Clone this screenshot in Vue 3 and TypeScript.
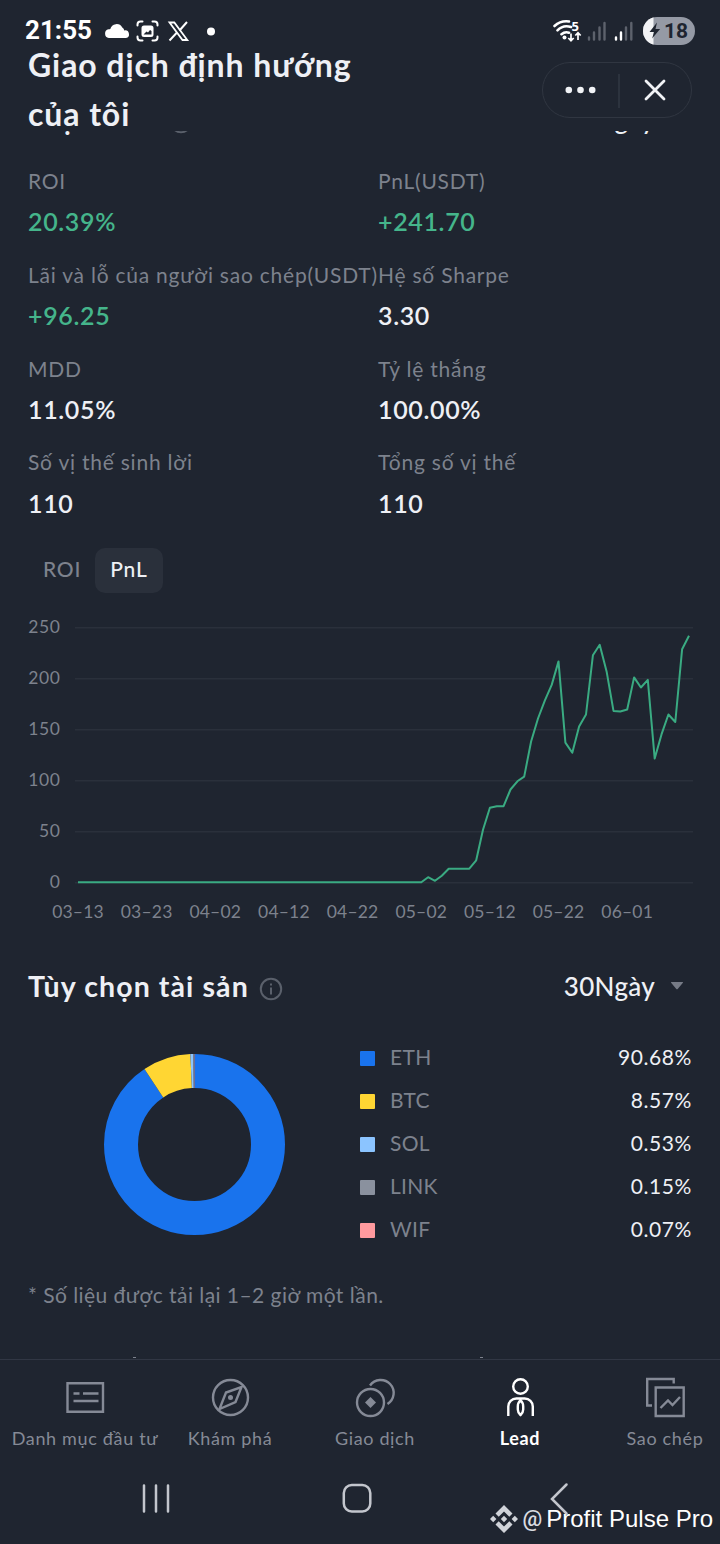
<script setup lang="ts">
import { computed } from 'vue'

interface Metric {
  label: string
  value: string
  up?: boolean
}

interface Asset {
  name: string
  share: number
  color: string
}

const metrics: Metric[] = [
  { label: 'ROI', value: '20.39%', up: true },
  { label: 'PnL(USDT)', value: '+241.70', up: true },
  { label: 'Lãi và lỗ của người sao chép(USDT)', value: '+96.25', up: true },
  { label: 'Hệ số Sharpe', value: '3.30' },
  { label: 'MDD', value: '11.05%' },
  { label: 'Tỷ lệ thắng', value: '100.00%' },
  { label: 'Số vị thế sinh lời', value: '110' },
  { label: 'Tổng số vị thế', value: '110' }
]

// daily PnL, flat at zero for the first 51 days
const pnl: number[] = [
  ...Array(51).fill(0),
  5, 1.5, 6.5, 13.3, 13.3, 13.3, 13.3, 21.6, 51.5, 73, 74.6, 74.6, 91, 99, 103.6,
  138, 160.6, 178, 193.5, 216.6, 137, 127, 152.7, 164.5, 222.5, 232.8, 206.8, 168,
  167.5, 169.4, 200.9, 191, 198.4, 121.3, 145, 164.5, 157.2, 228.4, 241.7
]

const yTicks = [250, 200, 150, 100, 50, 0]
const xTicks = ['03–13', '03–23', '04–02', '04–12', '04–22', '05–02', '05–12', '05–22', '06–01']

const xAt = (day: number) => 78 + day * 6.865
const yAt = (value: number) => 282.3 - value * 1.02

const line = computed(() =>
  pnl.map((v, i) => `${xAt(i).toFixed(1)},${yAt(v).toFixed(1)}`).join(' ')
)

const assets: Asset[] = [
  { name: 'ETH', share: 90.68, color: '#1973ed' },
  { name: 'BTC', share: 8.57, color: '#ffd633' },
  { name: 'SOL', share: 0.53, color: '#8bc4ff' },
  { name: 'LINK', share: 0.15, color: '#8a919e' },
  { name: 'WIF', share: 0.07, color: '#ff9a9e' }
]

const slices = computed(() => {
  let start = 0
  return assets.map((a) => {
    const slice = { ...a, start }
    start += a.share
    return slice
  })
})
</script>

<template>
  <div class="screen">
    <header class="top">
      <div class="status">
        <span class="clock">21:55</span>
        <svg class="notif" width="116" height="26" viewBox="0 0 116 26">
          <path d="M4.800 20a4.500 4.500 0 0 1-.3-8.800q1 0 1.800-.2a6.500 6.500 0 0 1 12-1.500 4.500 4.500 0 0 1 2 3 3.800 3.800 0 0 1 1.700 7.500z" fill="#fff" />
          <g fill="none" stroke="#fff" stroke-width="2" stroke-linecap="round">
            <path d="M33.500 7.500v-1a3 3 0 0 1 3-3h2M48.500 3.500h2a3 3 0 0 1 3 3v1M53.500 18.500v1a3 3 0 0 1-3 3h-2M38.500 22.500h-2a3 3 0 0 1-3-3v-1" />
          </g>
          <path fill-rule="evenodd" fill="#fff" d="M40 7.500h7a2.500 2.500 0 0 1 2.500 2.500v6.500a2.500 2.500 0 0 1-2.500 2.500h-7a2.500 2.500 0 0 1-2.500-2.500v-6.500A2.500 2.500 0 0 1 40 7.500zM39.500 16.500h8v-3.500l-1.500-1-2 2.500-1.500-1z" />
          <path d="M65.500 4.500h4.800l13 17.500h-4.800z" fill="none" stroke="#fff" stroke-width="1.800" />
          <path d="M83 4l-7.500 8.500M73 14.500l-7.500 8" stroke="#fff" stroke-width="2" />
          <circle cx="107" cy="13.500" r="4" fill="#fff" />
        </svg>
        <svg class="signals" width="142" height="30" viewBox="0 0 142 30">
          <g fill="none" stroke="#fff" stroke-width="2.600" stroke-linecap="round">
            <path d="M1.500 11a18 18 0 0 1 14.500-4.500M4.500 15.300a13 13 0 0 1 13.500-3.300M8.500 19.200a8 8 0 0 1 7.500-1.500" />
          </g>
          <circle cx="11.500" cy="22.500" r="2" fill="#fff" />
          <text class="band" x="18.500" y="16">5</text>
          <path d="M18 18.500v7m-2.700-2.500l2.700 2.700 2.700-2.700M25 25v-7m-2.700 2.500l2.700-2.700 2.700 2.700" fill="none" stroke="#fff" stroke-width="1.700" />
          <g stroke-width="2.400" stroke="#5d626c" stroke-linecap="round">
            <path d="M36 22.500v2M41 17.500v7M46.500 12.500v12M51.500 8v16.500M73 12.500v12M78.300 8v16.500" />
            <path d="M63 22.500v2M68 17.500v7" stroke="#fff" />
          </g>
          <clipPath id="pill"><rect x="90" y="2" width="52" height="28" rx="14" /></clipPath>
          <g clip-path="url(#pill)">
            <rect x="90" y="2" width="52" height="28" fill="#959aa5" />
            <rect x="90" y="2" width="10.500" height="28" fill="#f2f3f5" />
          </g>
          <path d="M104 7.500l-7.500 9.500h4.600l-2 6.500 8-9.500h-4.600z" fill="#1f2530" />
          <text class="percent" x="111" y="23">18</text>
        </svg>
      </div>
      <div class="title-row">
        <h1>Giao dịch định hướng<br />của tôi</h1>
        <div class="capsule">
          <svg width="148" height="54" viewBox="0 0 148 54">
            <g fill="#f1f3f6">
              <circle cx="25.800" cy="27" r="3.300" />
              <circle cx="37.500" cy="27" r="3.300" />
              <circle cx="49.200" cy="27" r="3.300" />
            </g>
            <path d="M76 11v34" stroke="#323843" stroke-width="1.500" />
            <path d="M103 18l18 18M121 18l-18 18" stroke="#f1f3f6" stroke-width="2.800" stroke-linecap="round" />
          </svg>
        </div>
      </div>
    </header>

    <main>
      <div class="section-head clipped">
        <h2>Hiệu suất</h2>
        <svg class="info" width="24" height="24" viewBox="0 0 24 24">
          <circle cx="12" cy="12" r="10.200" />
          <path d="M12 10.500v7M12 6.500v2" />
        </svg>
        <span class="range">30Ngày</span>
        <svg class="caret" width="14" height="10" viewBox="0 0 14 10"><path d="M1.500 1h11q1 0 .4.800l-5 6q-.900 1-1.800 0l-5-6q-.6-.8.4-.8z" /></svg>
      </div>

      <div class="metrics">
        <div v-for="m in metrics" :key="m.label" class="metric">
          <p class="label">{{ m.label }}</p>
          <p class="value" :class="{ up: m.up }">{{ m.value }}</p>
        </div>
      </div>

      <div class="tabs">
        <button>ROI</button>
        <button class="active">PnL</button>
      </div>

      <svg class="chart" width="720" height="338" viewBox="0 0 720 338">
        <g v-for="t in yTicks" :key="t">
          <path class="grid" :d="`M75 ${yAt(t) + 0.5}H693`" />
          <text x="60.500" :y="yAt(t) + 6" text-anchor="end">{{ t }}</text>
        </g>
        <polyline :points="line" />
        <text v-for="(t, i) in xTicks" :key="t" class="date" :x="xAt(i * 10)" y="318" text-anchor="middle">{{ t }}</text>
      </svg>

      <div class="section-head">
        <h2>Tùy chọn tài sản</h2>
        <svg class="info" width="24" height="24" viewBox="0 0 24 24">
          <circle cx="12" cy="12" r="10.200" />
          <path d="M12 10.500v7M12 6.500v2" />
        </svg>
        <span class="range">30Ngày</span>
        <svg class="caret" width="14" height="10" viewBox="0 0 14 10"><path d="M1.500 1h11q1 0 .4.800l-5 6q-.900 1-1.800 0l-5-6q-.6-.8.4-.8z" /></svg>
      </div>

      <div class="assets">
        <svg class="donut" width="182" height="182" viewBox="-91.500 -91.500 182 182">
          <circle
            v-for="s in slices"
            :key="s.name"
            r="73.500"
            pathLength="100"
            :stroke="s.color"
            :stroke-dasharray="`${s.share} ${100 - s.share}`"
            :stroke-dashoffset="-s.start"
            transform="rotate(-90)"
          />
        </svg>
        <ul>
          <li v-for="a in assets" :key="a.name">
            <i :style="{ backgroundColor: a.color }"></i>
            <span class="name">{{ a.name }}</span>
            <span class="share">{{ a.share.toFixed(2) }}%</span>
          </li>
        </ul>
      </div>

      <p class="note">* Số liệu được tải lại 1–2 giờ một lần.</p>
      <div class="peek"><i></i><i></i></div>
    </main>

    <nav class="tabbar">
      <a>
        <svg width="44" height="44" viewBox="0 0 44 44">
          <path d="M4.500 8.300h35.500v28.500H4.500zM10.500 18.500h6M20 18.500h15.500M10.500 26h25" />
        </svg>
        <span>Danh mục đầu tư</span>
      </a>
      <a>
        <svg width="44" height="44" viewBox="0 0 44 44">
          <circle cx="22.500" cy="22.500" r="17.500" />
          <path d="M33.500 12l-6 15-16 7 6.500-16.500z" />
          <circle cx="22.500" cy="22.500" r="2.500" class="fill" />
        </svg>
        <span>Khám phá</span>
      </a>
      <a>
        <svg width="44" height="44" viewBox="0 0 44 44">
          <circle cx="17.500" cy="27.500" r="13.500" />
          <path d="M17 10.500a13 13 0 1 1 17.500 18.500" />
          <path d="M17.500 22l5.500 5.500-5.500 5.500-5.500-5.500z" class="fill" />
        </svg>
        <span>Giao dịch</span>
      </a>
      <a class="active">
        <svg width="44" height="44" viewBox="0 0 44 44">
          <circle cx="22.500" cy="11.500" r="7.300" />
          <path d="M10.300 41v-9.500a8 8 0 0 1 8-8h8.500a8 8 0 0 1 8 8v9.500M22.500 25.500c-2 1.500-2.700 3.500-2.700 6v3c0 2.500 1 4 2.700 5.500 1.700-1.500 2.700-3 2.700-5.500v-3c0-2.500-.7-4.500-2.700-6z" />
        </svg>
        <span>Lead</span>
      </a>
      <a>
        <svg width="44" height="44" viewBox="0 0 44 44">
          <path d="M9 30.500H4.200V4h26.500v4.500M12.700 12.500h28v28.500h-28zM17.500 33l7.500-7.500 4.500 4.500 7.500-8" />
        </svg>
        <span>Sao chép</span>
      </a>
    </nav>

    <footer class="system">
      <svg width="720" height="60" viewBox="0 0 720 60">
        <g fill="none" stroke="#c3c6cd" stroke-width="2.500" stroke-linecap="round">
          <path d="M144 12.500v26M156 12.500v26M168 12.500v26" />
          <rect x="343.800" y="12" width="26.500" height="26.500" rx="8" />
          <path d="M566.500 11.500l-14.500 14.500 14.500 14.500" />
        </g>
      </svg>
      <div class="watermark">
        <svg width="28" height="28" viewBox="0 0 28 28">
          <path d="M14 0l8.500 8.500-3.200 3.200L14 6.400l-5.300 5.300-3.200-3.200zM14 28l8.500-8.500-3.200-3.200-5.300 5.300-5.300-5.300-3.200 3.200zM14 10.800l3.200 3.200-3.200 3.200-3.200-3.200zM3.200 10.800L6.400 14l-3.200 3.200L0 14zM24.800 10.800L28 14l-3.200 3.200-3.200-3.200z" />
        </svg>
        <span class="at">@</span>
        <span>Profit Pulse Pro</span>
      </div>
    </footer>
  </div>
</template>

<style>
body {
  background-color: #1f2530;
}
</style>

<style scoped>
.screen {
  display: flex;
  flex-direction: column;
  width: 720px;
  height: 1544px;
  overflow: hidden;
  background-color: #1f2530;
  color: #eef0f5;
  font-family: Lato, "Noto Sans", sans-serif;
}

h1, h2, p, ul {
  margin: 0;
  padding: 0;
}

.top {
  flex: none;
  height: 131px;
}

.status {
  display: flex;
  align-items: flex-end;
  height: 40px;
  padding: 0 25px;
}

.clock {
  width: 79px;
  font-family: Roboto, sans-serif;
  font-size: 26px;
  font-weight: 700;
  line-height: 19px;
  color: #fff;
}

.notif {
  margin-bottom: -4px;
}

.signals {
  margin-left: auto;
  margin-bottom: -5px;
}

.band {
  font: 700 13px "Open Sans", sans-serif;
  fill: #fff;
}

.percent {
  font: 700 21px Roboto, sans-serif;
  fill: #1f2530;
}

.title-row {
  display: flex;
  justify-content: space-between;
  padding: 0 28px;
}

h1 {
  font-size: 32px;
  font-weight: 700;
  line-height: 49px;
  letter-spacing: 0.92px;
}

.capsule {
  width: 148px;
  height: 54px;
  margin-top: 22px;
  border: 1px solid #303641;
  border-radius: 28px;
}

main {
  flex: none;
  height: 1228px;
  overflow: hidden;
}

.section-head {
  display: flex;
  align-items: center;
  height: 40px;
  padding: 0 36px 0 28px;
}

.section-head.clipped {
  margin-top: -32px;
}

h2 {
  font-size: 28.5px;
  font-weight: 700;
  letter-spacing: 1.1px;
}

.info {
  margin-left: 10px;
  margin-top: 5px;
  fill: none;
  stroke: #5a606b;
  stroke-width: 2;
}

.range {
  margin-left: auto;
  font-size: 26px;
  font-weight: 500;
  letter-spacing: 0.3px;
}

.caret {
  margin-left: 15px;
  margin-top: -1px;
  fill: #767b86;
}

.metrics {
  display: grid;
  grid-template-columns: 350px 1fr;
  grid-auto-rows: 93.8px;
  padding: 28px 0 0 28px;
}

.label {
  font-size: 21px;
  line-height: 28px;
  letter-spacing: 0.77px;
  white-space: nowrap;
  color: #7d828d;
}

.value {
  margin-top: 10.2px;
  font-size: 25px;
  font-weight: 600;
  line-height: 32px;
  letter-spacing: 0.65px;
}

.value.up {
  color: #45b58b;
}

.tabs {
  display: flex;
  padding: 6px 28px 0;
}

.tabs button {
  height: 45px;
  padding: 0 14px 4px 15px;
  border: none;
  border-radius: 10px;
  background: none;
  color: #7d828d;
  font: 500 21px Lato, sans-serif;
  letter-spacing: 0.8px;
}

.tabs .active {
  padding-right: 15px;
  background-color: #2a303b;
  color: #eef0f5;
}

.chart {
  display: block;
  margin-top: 7px;
}

.chart text {
  font-size: 17.5px;
  letter-spacing: 0.6px;
  fill: #7d828d;
}

.chart .date {
  letter-spacing: 0.2px;
}

.grid {
  stroke: #2a303b;
  stroke-width: 1.6;
}

.chart polyline {
  fill: none;
  stroke: #3aab82;
  stroke-width: 2;
  stroke-linejoin: round;
}

.chart + .section-head {
  margin-top: 28px;
}

.assets {
  display: flex;
  align-items: center;
  padding: 30.5px 28px 0 103px;
}

.donut {
  overflow: visible;
  fill: none;
  stroke-width: 34;
}

.assets ul {
  flex: 1;
  margin-left: 75px;
  list-style: none;
}

.assets li {
  display: flex;
  align-items: center;
  height: 43px;
  font-size: 21px;
}

.assets i {
  width: 15px;
  height: 15px;
  margin-right: 15px;
  border-radius: 1px;
}

.assets span {
  margin-top: -3px;
}

.name {
  letter-spacing: 0.3px;
  color: #7d828d;
}

.share {
  margin-left: auto;
  letter-spacing: 0.6px;
}

.note {
  margin-top: 29.5px;
  padding-left: 28px;
  font-size: 21px;
  line-height: 28px;
  letter-spacing: 0.45px;
  color: #7d828d;
}

.peek {
  display: flex;
  gap: 344px;
  padding: 48px 0 0 133px;
}

.peek i {
  width: 3px;
  height: 1px;
  background-color: #7d828d;
}

.tabbar {
  flex: none;
  display: flex;
  height: 113px;
  padding-left: 12.5px;
  border-top: 1px solid #313744;
}

.tabbar a {
  flex: none;
  display: flex;
  flex-direction: column;
  align-items: center;
  width: 145px;
  padding-top: 15px;
  color: #858a96;
  font-size: 18px;
  letter-spacing: 0.65px;
  white-space: nowrap;
}

.tabbar svg {
  fill: none;
  stroke: currentColor;
  stroke-width: 2.4;
}

.tabbar span {
  margin-top: 8px;
}

.tabbar .fill {
  fill: currentColor;
  stroke: none;
}

.tabbar .active {
  color: #fff;
  font-weight: 700;
}

.system {
  position: relative;
}

.watermark {
  position: absolute;
  right: 7px;
  top: 32px;
  display: flex;
  align-items: center;
  color: #fff;
  font: 24px "Liberation Sans", sans-serif;
}

.watermark svg {
  margin-right: 5px;
  fill: #d0d3d9;
}

.watermark .at {
  margin-right: 4px;
  margin-top: -2px;
  font: 500 22px Roboto, sans-serif;
  color: #d9dbe0;
}
</style>
